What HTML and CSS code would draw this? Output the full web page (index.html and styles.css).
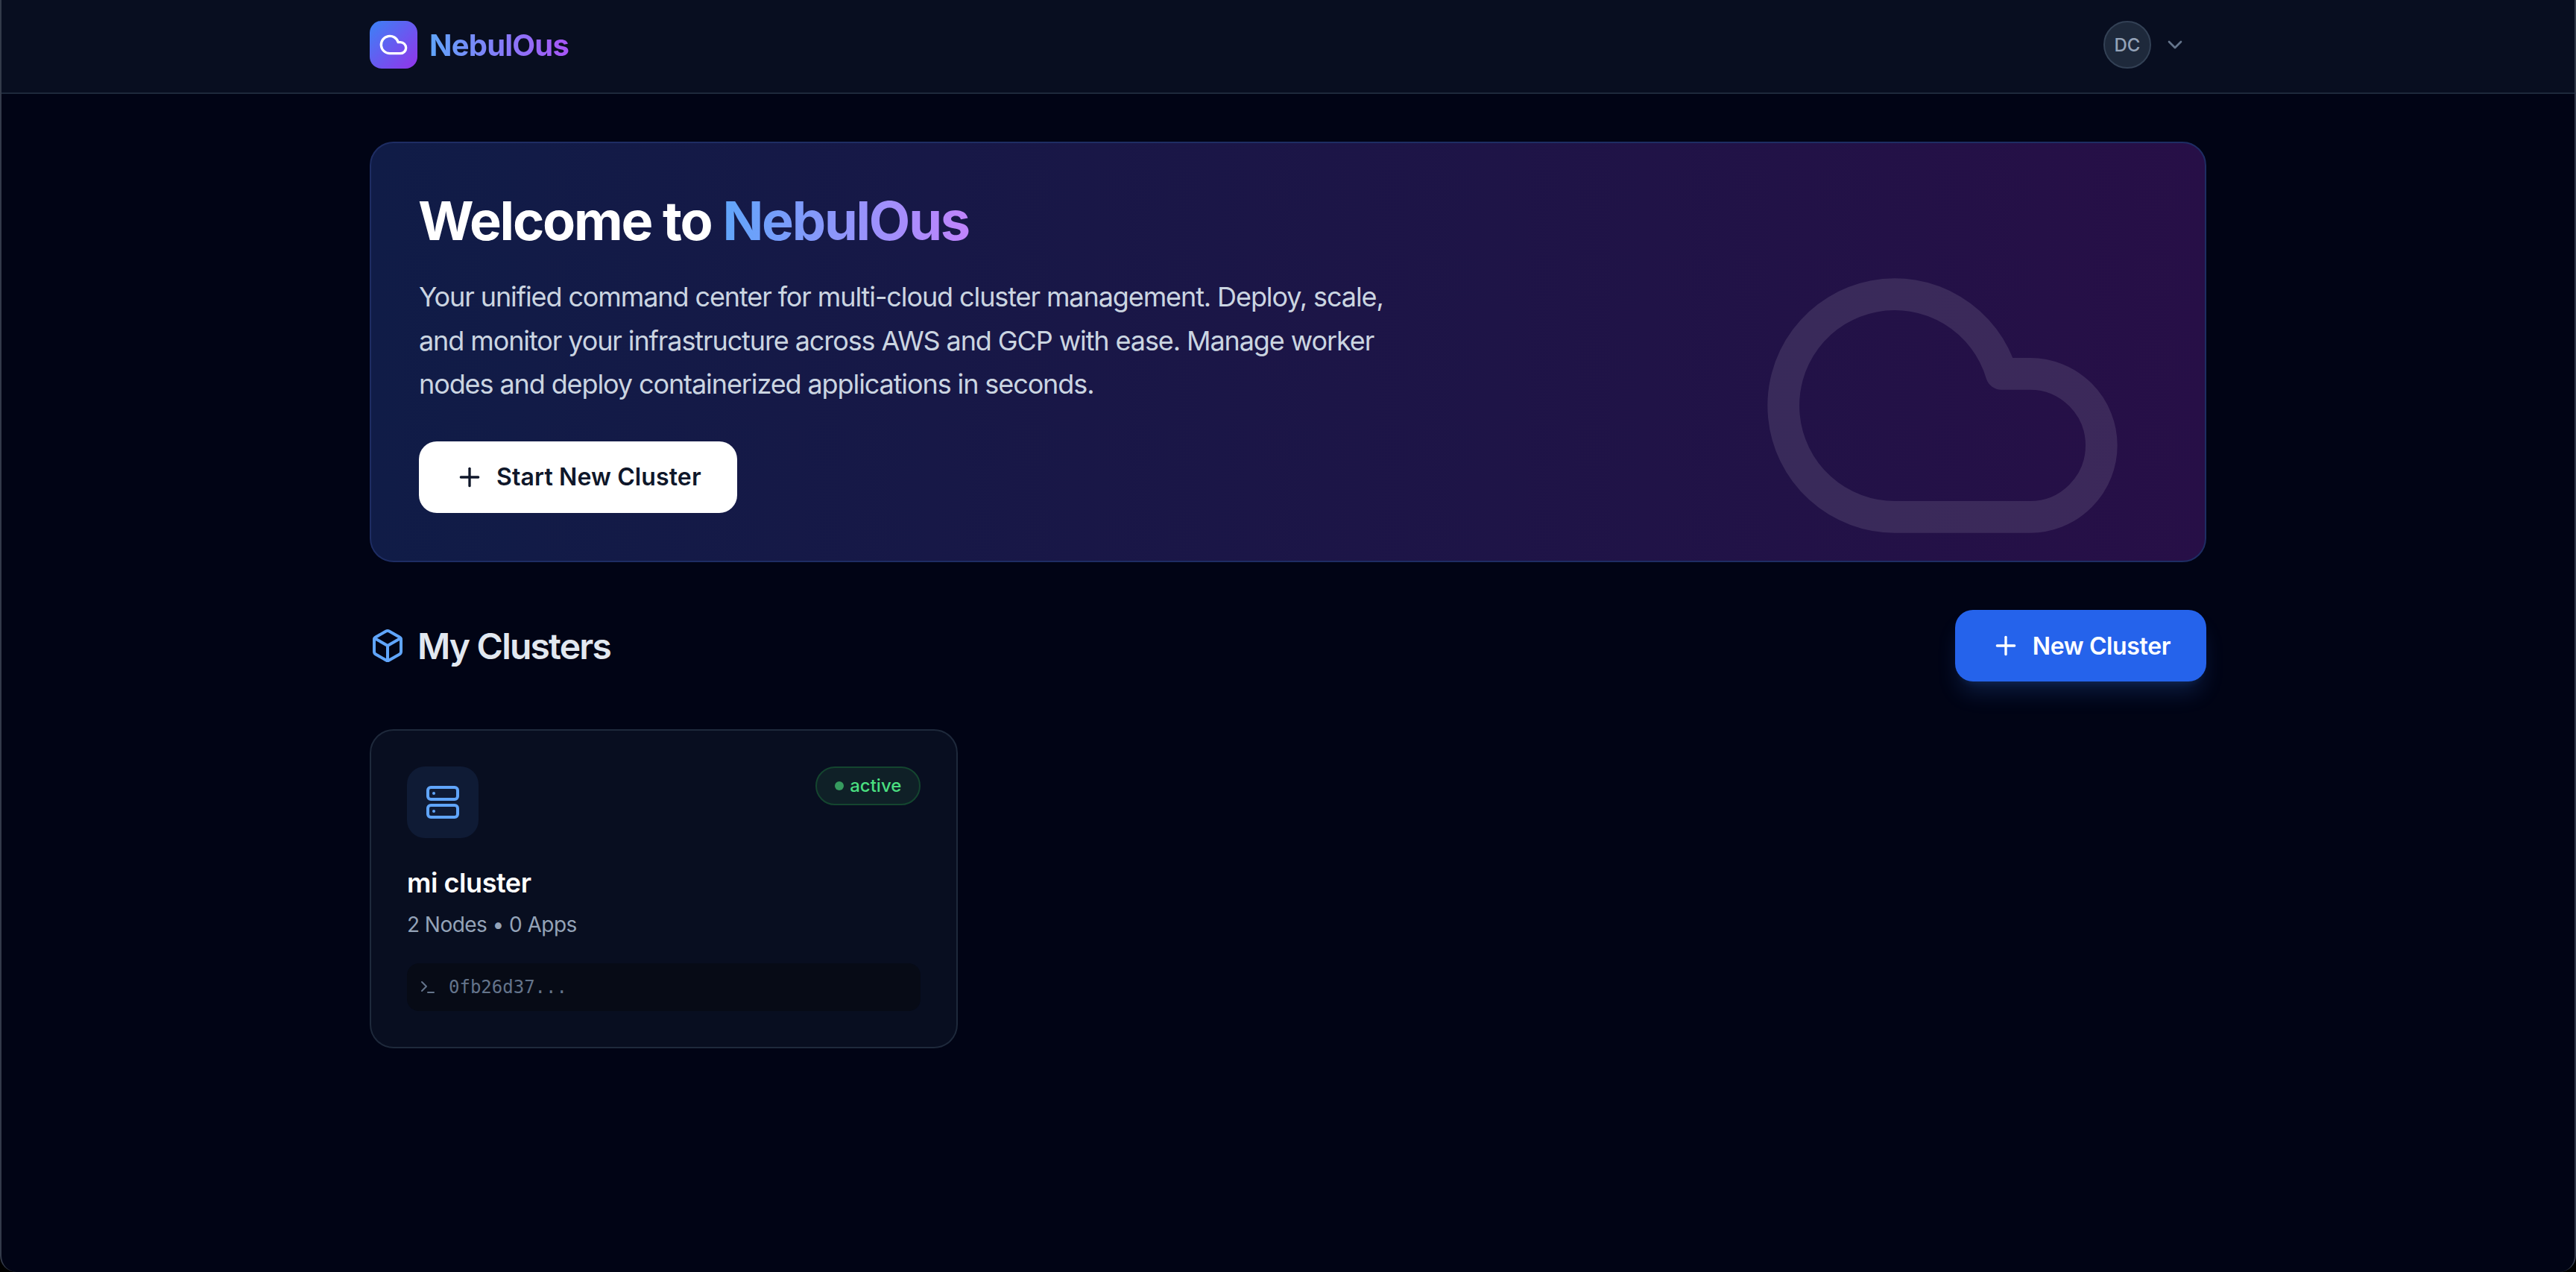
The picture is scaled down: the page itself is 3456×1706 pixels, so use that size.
FILE: index.html
```html
<!DOCTYPE html>
<html lang="en">

<head>
    <meta charset="UTF-8" />
    <meta name="viewport" content="width=device-width, initial-scale=1.0" />
    <title>NebulOus</title>
    <link rel="stylesheet" href="styles.css">
</head>

<body>
    <header class="topbar">
        <div class="topbar-inner">
            <a class="brand" href="#">
                <span class="brand-icon">
                    <svg class="icon icon-40" viewBox="0 0 24 24">
                        <path d="M17.5 19H9a7 7 0 1 1 6.71-9h1.79a4.5 4.5 0 1 1 0 9Z" />
                    </svg>
                </span>
                <span class="brand-name">NebulOus</span>
            </a>
            <button class="user-menu" type="button">
                <span class="avatar">DC</span>
                <svg class="icon icon-32 chevron" viewBox="0 0 24 24">
                    <path d="m6 9 6 6 6-6" />
                </svg>
            </button>
        </div>
    </header>

    <main class="content">
        <section class="hero">
            <svg class="hero-cloud" viewBox="0 0 24 24">
                <path d="M17.5 19H9a7 7 0 1 1 6.71-9h1.79a4.5 4.5 0 1 1 0 9Z" />
            </svg>
            <h1 class="hero-title">Welcome to <span class="hero-accent">NebulOus</span></h1>
            <p class="hero-text">Your unified command center for multi-cloud cluster management. Deploy, scale, and
                monitor your infrastructure across AWS and GCP with ease. Manage worker nodes and deploy containerized
                applications in seconds.</p>
            <button class="btn btn-white" type="button">
                <svg class="icon icon-40" viewBox="0 0 24 24">
                    <path d="M5 12h14" />
                    <path d="M12 5v14" />
                </svg>
                Start New Cluster
            </button>
        </section>

        <div class="section-head">
            <h2 class="section-title">
                <svg class="icon icon-48 icon-blue" viewBox="0 0 24 24">
                    <path
                        d="M21 8a2 2 0 0 0-1-1.73l-7-4a2 2 0 0 0-2 0l-7 4A2 2 0 0 0 3 8v8a2 2 0 0 0 1 1.73l7 4a2 2 0 0 0 2 0l7-4A2 2 0 0 0 21 16Z" />
                    <path d="m3.3 7 8.7 5 8.7-5" />
                    <path d="M12 22V12" />
                </svg>
                My Clusters
            </h2>
            <button class="btn btn-blue" type="button">
                <svg class="icon icon-40" viewBox="0 0 24 24">
                    <path d="M5 12h14" />
                    <path d="M12 5v14" />
                </svg>
                New Cluster
            </button>
        </div>

        <div class="cluster-grid">
            <article class="cluster-card">
                <div class="card-top">
                    <span class="card-icon">
                        <svg class="icon icon-48 icon-blue" viewBox="0 0 24 24">
                            <rect width="20" height="8" x="2" y="2" rx="2" ry="2" />
                            <rect width="20" height="8" x="2" y="14" rx="2" ry="2" />
                            <line x1="6" x2="6.01" y1="6" y2="6" />
                            <line x1="6" x2="6.01" y1="18" y2="18" />
                        </svg>
                    </span>
                    <span class="status-badge"><span class="status-dot"></span>active</span>
                </div>
                <h3 class="card-name">mi cluster</h3>
                <p class="card-meta">2 Nodes • 0 Apps</p>
                <div class="card-id">
                    <svg class="icon icon-24" viewBox="0 0 24 24">
                        <path d="m4 17 6-6-6-6" />
                        <path d="M12 19h8" />
                    </svg>
                    <span>0fb26d37...</span>
                </div>
            </article>
        </div>
    </main>
</body>

</html>
```

FILE: styles.css
```css
* {
    box-sizing: border-box;
}

html {
    background-color: #000000;
}

body {
    margin: 0;
    min-height: 1706px;
    background-color: #010415;
    border-left: 2px solid #333a4a;
    border-right: 2px solid #333a4a;
    border-radius: 0 0 22px 22px;
    overflow: hidden;
    font-family: Inter, "Noto Sans", sans-serif;
    color: #ffffff;
}

h1,
h2,
h3,
p {
    margin: 0;
}

button {
    font-family: inherit;
    border: none;
    background: none;
    cursor: pointer;
}

.icon {
    fill: none;
    stroke: currentColor;
    stroke-width: 2;
    stroke-linecap: round;
    stroke-linejoin: round;
    flex-shrink: 0;
    display: block;
}

.icon-24 {
    width: 24px;
    height: 24px;
}

.icon-32 {
    width: 32px;
    height: 32px;
}

.icon-40 {
    width: 40px;
    height: 40px;
}

.icon-48 {
    width: 48px;
    height: 48px;
}

.icon-blue {
    color: #60a5fa;
}

/* top bar */
.topbar {
    height: 126px;
    background-color: #080e20;
    border-bottom: 2px solid #1e293b;
}

.topbar-inner {
    width: 2560px;
    margin: 0 auto;
    padding: 28px 48px 0;
    display: flex;
    justify-content: space-between;
    align-items: flex-start;
}

.brand {
    display: flex;
    align-items: center;
    gap: 16px;
    text-decoration: none;
}

.brand-icon {
    width: 64px;
    height: 64px;
    border-radius: 16px;
    background: linear-gradient(135deg, #3b82f6, #9333ea);
    display: flex;
    align-items: center;
    justify-content: center;
    color: #ffffff;
}

.brand-name {
    font-size: 40px;
    font-weight: 700;
    letter-spacing: -0.8px;
    background: linear-gradient(90deg, #60a5fa, #a855f7);
    -webkit-background-clip: text;
    background-clip: text;
    color: transparent;
}

.user-menu {
    display: flex;
    align-items: center;
    gap: 16px;
    padding: 0 26px 0 0;
    color: #64748b;
}

.avatar {
    width: 64px;
    height: 64px;
    border-radius: 50%;
    background-color: #1e293b;
    border: 2px solid #334155;
    display: flex;
    align-items: center;
    justify-content: center;
    font-size: 24px;
    font-weight: 500;
    color: #94a3b8;
}

/* main */
.content {
    width: 2560px;
    margin: 0 auto;
    padding: 64px 48px;
}

.hero {
    position: relative;
    overflow: hidden;
    height: 564px;
    padding: 64px;
    border: 2px solid #1e2d63;
    border-radius: 32px;
    background: linear-gradient(90deg, #101c47, #270f47);
    margin-bottom: 64px;
}

.hero-cloud {
    position: absolute;
    top: 96px;
    right: 96px;
    width: 512px;
    height: 512px;
    fill: none;
    stroke: #ffffff;
    stroke-width: 2;
    stroke-linecap: round;
    stroke-linejoin: round;
    opacity: 0.1;
}

.hero-title {
    font-size: 72px;
    line-height: 80px;
    font-weight: 700;
    letter-spacing: -2.2px;
    margin-bottom: 33px;
    margin-left: -1px;
    position: relative;
}

.hero-accent {
    background: linear-gradient(90deg, #60a5fa, #c084fc);
    -webkit-background-clip: text;
    background-clip: text;
    color: transparent;
}

.hero-text {
    position: relative;
    max-width: 1344px;
    font-size: 36px;
    line-height: 58.5px;
    letter-spacing: -1.1px;
    color: #cbd5e1;
    margin-bottom: 47px;
}

.btn {
    display: inline-flex;
    align-items: center;
    gap: 16px;
    height: 96px;
    padding: 0 48px;
    border-radius: 24px;
    font-size: 32px;
    font-weight: 600;
}

.btn-white {
    position: relative;
    background-color: #ffffff;
    color: #0f172a;
    letter-spacing: 0.12px;
}

.btn-blue {
    background-color: #2563eb;
    color: #ffffff;
    letter-spacing: -0.38px;
    box-shadow: 0 20px 30px -6px rgba(59, 130, 246, 0.2), 0 8px 12px -8px rgba(59, 130, 246, 0.2);
}

.section-head {
    display: flex;
    justify-content: space-between;
    align-items: center;
    margin-bottom: 64px;
}

.section-title {
    display: flex;
    align-items: center;
    gap: 16px;
    font-size: 48px;
    font-weight: 600;
    letter-spacing: -1.8px;
    color: #e2e8f0;
}

/* cluster cards */
.cluster-grid {
    display: grid;
    grid-template-columns: repeat(3, 1fr);
    gap: 48px;
}

.cluster-card {
    padding: 48px;
    background-color: #080e20;
    border: 2px solid #1e293b;
    border-radius: 32px;
}

.card-top {
    display: flex;
    justify-content: space-between;
    align-items: flex-start;
    margin-bottom: 32px;
}

.card-icon {
    width: 96px;
    height: 96px;
    border-radius: 24px;
    background-color: #0f1b35;
    display: flex;
    align-items: center;
    justify-content: center;
}

.status-badge {
    display: flex;
    align-items: center;
    gap: 8px;
    padding: 8px 24px;
    border: 2px solid #14452f;
    border-radius: 999px;
    background-color: #0f2027;
    color: #4ade80;
    font-size: 24px;
    line-height: 32px;
    font-weight: 500;
}

.status-dot {
    width: 12px;
    height: 12px;
    border-radius: 50%;
    background-color: #369b5f;
}

.card-name {
    font-size: 36px;
    line-height: 56px;
    font-weight: 600;
    letter-spacing: -0.45px;
    margin-bottom: 8px;
}

.card-meta {
    font-size: 28px;
    line-height: 40px;
    letter-spacing: -0.55px;
    color: #94a3b8;
    margin-bottom: 32px;
}

.card-id {
    height: 64px;
    padding: 0 16px;
    display: flex;
    align-items: center;
    gap: 16px;
    border-radius: 16px;
    background-color: #070b16;
    color: #64748b;
    font-family: "DejaVu Sans Mono", "Liberation Mono", monospace;
    font-size: 24px;
}
```
